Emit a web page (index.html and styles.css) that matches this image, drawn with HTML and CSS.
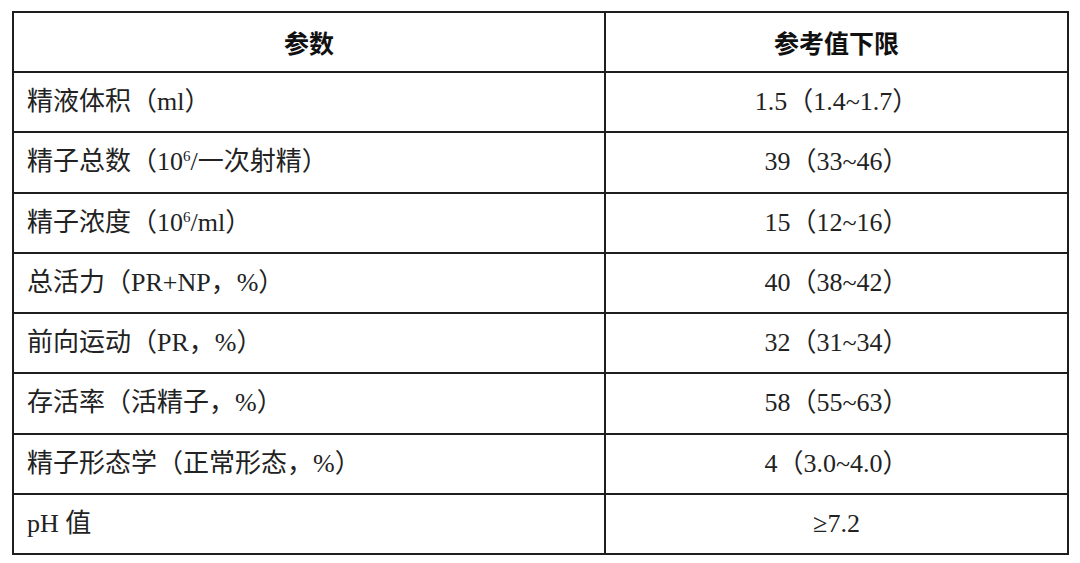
FILE: index.html
```html
<!DOCTYPE html>
<html lang="zh-CN">
<head>
<meta charset="utf-8">
<title>参数</title>
<link rel="stylesheet" href="styles.css">
</head>
<body>
<table class="ref-table">
  <colgroup>
    <col class="col-param">
    <col class="col-value">
  </colgroup>
  <thead>
    <tr><th>参数</th><th>参考值下限</th></tr>
  </thead>
  <tbody>
    <tr><td>精液体积（ml）</td><td class="val">1.5（1.4~1.7）</td></tr>
    <tr><td>精子总数（10<sup>6</sup>/一次射精）</td><td class="val">39（33~46）</td></tr>
    <tr><td>精子浓度（10<sup>6</sup>/ml）</td><td class="val">15（12~16）</td></tr>
    <tr><td>总活力（PR+NP，%）</td><td class="val">40（38~42）</td></tr>
    <tr><td>前向运动（PR，%）</td><td class="val">32（31~34）</td></tr>
    <tr><td>存活率（活精子，%）</td><td class="val">58（55~63）</td></tr>
    <tr><td>精子形态学（正常形态，%）</td><td class="val">4（3.0~4.0）</td></tr>
    <tr><td>pH 值</td><td class="val">≥7.2</td></tr>
  </tbody>
</table>
</body>
</html>
```
FILE: styles.css
```css
html, body {
  margin: 0;
  padding: 0;
  background: #ffffff;
}
body {
  font-family: "Liberation Serif", "Noto Sans CJK SC", serif;
  color: #222;
}
.ref-table {
  margin: 11px 0 0 12px;
  width: 1055px;
  height: 544px;
  border-collapse: collapse;
  table-layout: fixed;
}
.col-param { width: 592px; }
.col-value { width: 463px; }
.ref-table th,
.ref-table td {
  border: 2px solid #1e1e1e;
  height: 58px;
  padding: 0;
  font-size: 26px;
  line-height: 1;
  vertical-align: middle;
}
.ref-table th {
  font-family: "Noto Sans CJK SC", sans-serif;
  font-weight: 700;
  font-size: 25px;
  text-align: center;
  color: #111;
}
.ref-table td {
  text-align: left;
  padding-left: 13px;
}
.ref-table td.val {
  text-align: center;
  padding-left: 0;
}
sup {
  font-size: 15px;
  vertical-align: 9px;
  line-height: 0;
}
```
